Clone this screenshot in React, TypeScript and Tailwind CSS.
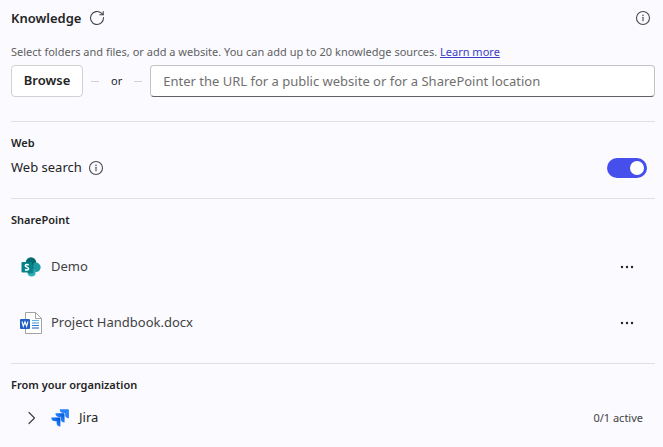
import React from 'react';

interface SourceRowProps {
  name: string;
  icon: React.ReactNode;
}

const InfoIcon = () => (
  <svg width="16" height="16" viewBox="0 0 16 16" fill="none" aria-hidden="true">
    <circle cx="8" cy="8" r="6.5" stroke="#4a4a4e" strokeWidth="1.1" />
    <path d="M8 7.2v3.6" stroke="#4a4a4e" strokeWidth="1.1" strokeLinecap="round" />
    <circle cx="8" cy="5.3" r="0.8" fill="#4a4a4e" />
  </svg>
);

const RefreshIcon = () => (
  <svg width="16" height="16" viewBox="0 0 16 16" fill="none" stroke="#424242" strokeWidth="1.1" strokeLinecap="round" strokeLinejoin="round" aria-hidden="true">
    <path d="M14.5 7.6A6.5 6.5 0 1 1 12.4 3.2L14 4.7" />
    <path d="M14.2 1.5v3.3h-3.4" />
  </svg>
);

const SharePointIcon = () => (
  <svg width="20" height="20" viewBox="0 0 20 20" aria-hidden="true">
    <circle cx="10" cy="5.5" r="5.2" fill="#036c70" />
    <circle cx="14.8" cy="10.3" r="4.8" fill="#1a9ba1" />
    <circle cx="10.6" cy="15.6" r="4" fill="#2bb3bb" />
    <path d="M5 5h6.5a1 1 0 0 1 1 1v9.5a1 1 0 0 1-1 1H6.7A4 4 0 0 1 6.6 15z" fill="#02494c" opacity="0.45" />
    <rect x="0.5" y="5" width="10.5" height="10.5" rx="1" fill="#038387" />
    <path d="M7.7 8.1C6.700 7.300 4.400 7.300 4.300 8.700c0 1.700 3.300 1.200 3.300 3 0 1.500-2.300 1.500-3.600.8" fill="none" stroke="#fff" strokeWidth="1.5" />
  </svg>
);

const WordIcon = () => (
  <svg width="22" height="22" viewBox="0 0 22 22" fill="none" aria-hidden="true">
    <path d="M5.5.5h10l6 6v15h-16z" fill="#fff" stroke="#a3a3a6" />
    <path d="M15.5.5v6h6" stroke="#a3a3a6" />
    <path d="M12 8.5h7" stroke="#5ab5f2" />
    <path d="M12 11h7" stroke="#3a91df" />
    <path d="M12 13.5h7" stroke="#2b7cd3" />
    <path d="M12 16h7" stroke="#185abd" />
    <rect y="7" width="10" height="10" rx="1" fill="#1f5fc4" />
    <path d="M2 9.5l1.3 4.7L5 9.8l1.6 4.4L8 9.5" stroke="#fff" strokeWidth="1.1" />
  </svg>
);

const JiraIcon = () => (
  <svg width="18" height="18" viewBox="0 0.8 19 19" aria-hidden="true">
    <defs>
      <linearGradient id="jira-mid" x1="15" y1="5" x2="9" y2="11" gradientUnits="userSpaceOnUse">
        <stop offset="0.15" stopColor="#0052cc" />
        <stop offset="1" stopColor="#2684ff" />
      </linearGradient>
      <linearGradient id="jira-low" x1="10" y1="10" x2="4" y2="16" gradientUnits="userSpaceOnUse">
        <stop offset="0.15" stopColor="#0052cc" />
        <stop offset="1" stopColor="#2684ff" />
      </linearGradient>
    </defs>
    <path d="M18 1H9.200a4 4 0 0 0 4 4h1.700v1.600a4 4 0 0 0 4 4V1.900A.9.9 0 0 0 18 1z" fill="#2684ff" />
    <path d="M13.500 5.400H4.700a4 4 0 0 0 4 4h1.600V11a4 4 0 0 0 4 4V6.300a.9.9 0 0 0-.8-.9z" fill="url(#jira-mid)" />
    <path d="M9.100 9.800H.3a4 4 0 0 0 4 4h1.600v1.600a4 4 0 0 0 4 4v-8.700a.9.9 0 0 0-.8-.9z" fill="url(#jira-low)" />
  </svg>
);

const SourceRow: React.FC<SourceRowProps> = ({ name, icon }) => (
  <li className="flex h-14 items-center justify-between pr-4 pl-2">
    <div className="flex items-center gap-2">
      <span className="flex w-6 justify-center">{icon}</span>
      <span className="text-[13px] text-[#424242]">{name}</span>
    </div>
    <button type="button" aria-label={`More options for ${name}`} className="flex size-6 items-center justify-center">
      <svg width="14" height="4" viewBox="0 0 14 4" fill="#242424" aria-hidden="true">
        <circle cx="2" cy="2" r="1.2" />
        <circle cx="7" cy="2" r="1.2" />
        <circle cx="12" cy="2" r="1.2" />
      </svg>
    </button>
  </li>
);

export default function App() {
  return (
    <main className="min-h-screen bg-[#fafaff] pt-2 pr-2 pb-2 pl-[11px] font-['Segoe_UI','Noto_Sans',sans-serif] text-[#242424]">
      <header className="flex h-5 items-center justify-between">
        <div className="flex items-center gap-2">
          <h1 className="text-[13px] leading-5 font-semibold">Knowledge</h1>
          <button type="button" aria-label="Refresh">
            <RefreshIcon />
          </button>
        </div>
        <button type="button" aria-label="About knowledge" className="mr-1">
          <InfoIcon />
        </button>
      </header>

      {/* Add a source */}
      <section className="border-b border-[#e0e0e3] pt-4 pb-6">
        <p className="text-[11px] leading-4 text-[#616161]">
          Select folders and files, or add a website. You can add up to 20 knowledge sources.{' '}
          <a href="#learn-more" className="text-[#3b3fc4] underline">Learn more</a>
        </p>
        <div className="mt-[5px] flex items-center">
          <button type="button" className="h-8 w-18 shrink-0 rounded border border-[#d1d1d1] bg-white text-[13px] font-semibold">
            Browse
          </button>
          <div className="flex shrink-0 items-center gap-3 px-2 text-[11px]">
            <span className="h-px w-2 bg-[#d1d1d1]" />
            <span>or</span>
            <span className="h-px w-2 bg-[#d1d1d1]" />
          </div>
          <input
            type="url"
            aria-label="Website or SharePoint URL"
            placeholder="Enter the URL for a public website or for a SharePoint location"
            className="h-8 min-w-0 flex-1 rounded border border-[#c4c4c8] border-b-[#616161] bg-white px-3 text-[13px] placeholder:text-[#707070]"
          />
        </div>
      </section>

      <section className="border-b border-[#e0e0e3] pt-3 pb-5">
        <h2 className="text-[11px] leading-[18px] font-semibold">Web</h2>
        <div className="mt-1.5 flex h-5 items-center justify-between pr-2">
          <div className="flex items-center gap-1.5">
            <label htmlFor="web-search" className="text-[13px]">Web search</label>
            <button type="button" aria-label="About web search">
              <InfoIcon />
            </button>
          </div>
          <input
            id="web-search"
            type="checkbox"
            role="switch"
            defaultChecked
            className="flex h-5 w-10 appearance-none items-center rounded-full bg-[#8a8a8e] px-[3px] before:size-[14px] before:rounded-full before:bg-white checked:justify-end checked:bg-[#464feb]"
          />
        </div>
      </section>

      <section className="border-b border-[#e0e0e3] pt-3 pb-3">
        <h2 className="text-[11px] leading-[18px] font-semibold">SharePoint</h2>
        <ul className="mt-2.5">
          <SourceRow name="Demo" icon={<SharePointIcon />} />
          <SourceRow name="Project Handbook.docx" icon={<WordIcon />} />
        </ul>
      </section>

      <section className="pt-3">
        <h2 className="text-[11px] leading-[18px] font-semibold">From your organization</h2>
        <div className="mt-3 flex h-6 items-center justify-between pr-3 pl-3">
          <div className="flex items-center gap-2.5">
            <button type="button" aria-label="Expand Jira" className="flex w-[18px] items-center">
              <svg width="16" height="16" viewBox="0 0 16 16" fill="none" stroke="#424242" strokeWidth="1.2" strokeLinecap="round" strokeLinejoin="round" aria-hidden="true">
                <path d="M6 2.5L11.500 8 6 13.500" />
              </svg>
            </button>
            <JiraIcon />
            <span className="text-[13px]">Jira</span>
          </div>
          <span className="text-[11px] text-[#424242]">0/1 active</span>
        </div>
      </section>
    </main>
  );
}
